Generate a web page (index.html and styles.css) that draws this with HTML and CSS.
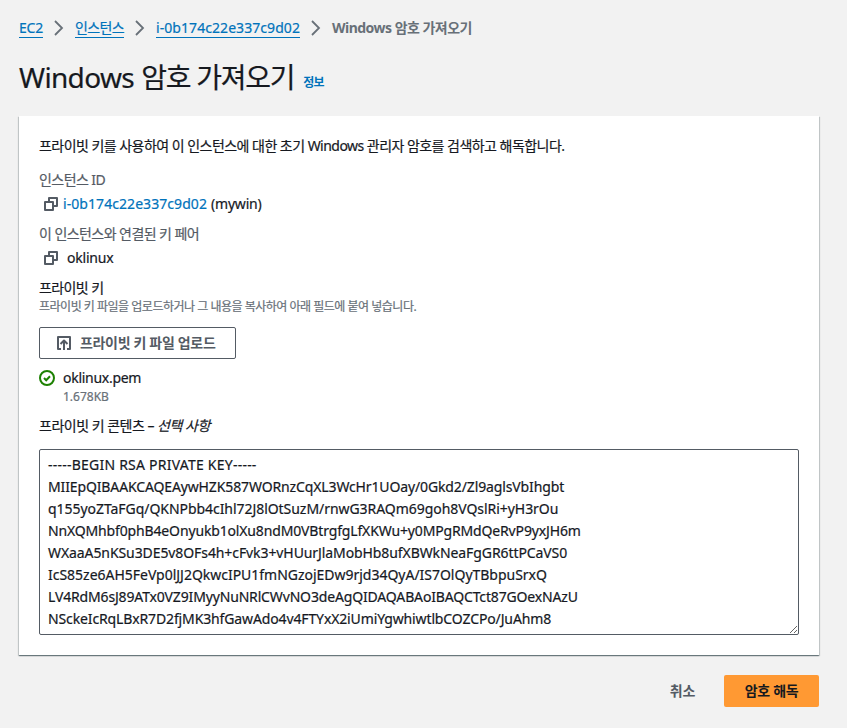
FILE: index.html
```html
<!DOCTYPE html>
<html lang="ko">
<head>
<meta charset="utf-8">
<title>Windows 암호 가져오기</title>
<link rel="stylesheet" href="styles.css">
</head>
<body>
<nav class="crumbs">
<a class="ec2">EC2</a>
<svg class="chev" viewBox="0 0 10 16"><path d="M1 1l7 7-7 7"/></svg>
<a class="instances">인스턴스</a>
<svg class="chev" viewBox="0 0 10 16"><path d="M1 1l7 7-7 7"/></svg>
<a class="id">i-0b174c22e337c9d02</a>
<svg class="chev" viewBox="0 0 10 16"><path d="M1 1l7 7-7 7"/></svg>
<b>Windows 암호 가져오기</b>
</nav>
<header><h1><span class="title-en">Windows</span> <span class="title-ko">암호 가져오기</span></h1><a class="info">정보</a></header>
<main class="card">
<p class="row intro">프라이빗 키를 사용하여 이 인스턴스에 대한 초기 Windows 관리자 암호를 검색하고 해독합니다.</p>
<p class="row label">인스턴스 ID</p>
<p class="row value"><svg class="copy" viewBox="0 0 16 16"><path d="M2 6h8v8H2zM6 6V2h8v8h-4"/></svg><a class="id">i-0b174c22e337c9d02</a><span class="name">(mywin)</span></p>
<p class="row label">이 인스턴스와 연결된 키 페어</p>
<p class="row value key"><svg class="copy" viewBox="0 0 16 16"><path d="M2 6h8v8H2zM6 6V2h8v8h-4"/></svg><span class="name">oklinux</span></p>
<p class="row field">프라이빗 키</p>
<p class="desc">프라이빗 키 파일을 업로드하거나 그 내용을 복사하여 아래 필드에 붙여 넣습니다.</p>
<button class="upload"><svg class="up" viewBox="0 0 16 16"><path d="M5 14H2V2h12v12h-3M8 15V6M4.500 9L8 5.500 11.500 9"/></svg><span>프라이빗 키 파일 업로드</span></button>
<p class="row file"><svg class="ok" viewBox="0 0 16 16"><circle cx="8" cy="8" r="7"/><path d="M5 8l2.200 2.200L11 6.200"/></svg><span>oklinux.pem</span></p>
<p class="size">1.678KB</p>
<p class="row content">프라이빗 키 콘텐츠 – <i>선택 사항</i></p>
<div class="area">
<div>-----BEGIN RSA PRIVATE KEY-----</div>
<div>MIIEpQIBAAKCAQEAywHZK587WORnzCqXL3WcHr1UOay/0Gkd2/Zl9aglsVbIhgbt</div>
<div>q155yoZTaFGq/QKNPbb4cIhl72J8lOtSuzM/rnwG3RAQm69goh8VQslRi+yH3rOu</div>
<div>NnXQMhbf0phB4eOnyukb1olXu8ndM0VBtrgfgLfXKWu+y0MPgRMdQeRvP9yxJH6m</div>
<div>WXaaA5nKSu3DE5v8OFs4h+cFvk3+vHUurJlaMobHb8ufXBWkNeaFgGR6ttPCaVS0</div>
<div>IcS85ze6AH5FeVp0lJJ2QkwcIPU1fmNGzojEDw9rjd34QyA/IS7OlQyTBbpuSrxQ</div>
<div>LV4RdM6sJ89ATx0VZ9IMyyNuNRlCWvNO3deAgQIDAQABAoIBAQCTct87GOexNAzU</div>
<div>NSckeIcRqLBxR7D2fjMK3hfGawAdo4v4FTYxX2iUmiYgwhiwtlbCOZCPo/JuAhm8</div>
</div>
</main>
<footer><button class="cancel">취소</button><button class="go">암호 해독</button></footer>
</body>
</html>
```
FILE: styles.css
```css
* { box-sizing: border-box; }
body { margin: 0; padding: 17px 28px 0 19px; height: 728px; overflow: hidden; background: #f2f2f2; color: #16191f; font: 14px/22px "Noto Sans", "Noto Sans CJK KR", sans-serif; -webkit-text-stroke: .2px; }
p, h1 { margin: 0; white-space: nowrap; }
a { color: #0073bb; }
svg { fill: none; flex: none; }
.id { letter-spacing: .065px; }
.crumbs { display: flex; height: 22px; white-space: nowrap; }
.crumbs a { border-bottom: 1px solid #0073bb; height: 21px; }
.crumbs b { color: #687078; letter-spacing: -.52px; -webkit-text-stroke: 0; }
.ec2 { letter-spacing: -.214px; }
.instances { letter-spacing: -.633px; }
.chev { width: 10px; height: 16px; margin: 3px 11px; stroke: #687078; stroke-width: 1.8; }
header { display: flex; height: 36px; margin-top: 20px; }
h1 { font-size: 28px; line-height: 36px; font-weight: 400; }
.title-en { letter-spacing: -.656px; }
.title-ko { letter-spacing: -1.263px; }
.info { font-size: 12px; font-weight: 700; margin: 13px 0 0 9px; letter-spacing: -.8px; -webkit-text-stroke: 0; }
.card { width: 800px; height: 539px; margin-top: 21px; padding: 19px 20px 0; background: #fff; box-shadow: 0 1px 1px rgba(0,28,36,.4), 1px 1px 1px rgba(0,28,36,.15), -1px 1px 1px rgba(0,28,36,.15); }
.row { height: 22px; }
.intro { margin-bottom: 12px; letter-spacing: -.535px; }
.label { color: #545b64; margin-bottom: 2px; letter-spacing: -.56px; }
.value { display: flex; margin: 0 0 8px 4px; gap: 4px; }
.name { letter-spacing: -.2px; }
.key { gap: 8px; }
.copy, .up { width: 16px; height: 16px; margin-top: 3px; stroke: #545b64; stroke-width: 2; stroke-linejoin: round; }
.field { letter-spacing: -.6px; }
.desc { font-size: 12px; line-height: 18px; height: 18px; color: #687078; margin-top: -1px; letter-spacing: -.49px; }
.upload { display: flex; align-items: center; gap: 8px; width: 197px; height: 32px; margin: 11px 0 8px; padding: 0 16px; border: 1px solid #545b64; border-radius: 2px; background: #fff; color: #545b64; font: inherit; font-weight: 700; letter-spacing: -.33px; white-space: nowrap; -webkit-text-stroke: 0; }
.upload .up { margin: 0; }
.file { display: flex; gap: 8px; letter-spacing: -.28px; }
.ok { width: 16px; height: 16px; margin-top: 3px; stroke: #1d8102; stroke-width: 2; }
.size { margin: -1px 0 9px 24px; height: 18px; font-size: 12px; line-height: 18px; color: #687078; }
.content { letter-spacing: -.5px; }
.area { width: 760px; height: 186px; margin-top: 12px; padding: 4px 8px; border: 1px solid #545b64; border-radius: 2px; overflow: hidden; resize: both; white-space: nowrap; }
.area div { height: 22px; }
.area div:nth-child(1) { letter-spacing: .23px; }
.area div:nth-child(2) { letter-spacing: -.13px; }
.area div:nth-child(3) { letter-spacing: -.05px; }
.area div:nth-child(4) { letter-spacing: -.15px; }
.area div:nth-child(5) { letter-spacing: -.09px; }
.area div:nth-child(6) { letter-spacing: -.02px; }
.area div:nth-child(7) { letter-spacing: -.155px; }
.area div:nth-child(8) { letter-spacing: -.13px; }
footer { display: flex; justify-content: flex-end; width: 800px; margin-top: 20px; }
footer button { height: 32px; padding: 0 20px; border: 0; border-radius: 2px; background: none; font: inherit; font-weight: 700; color: #545b64; letter-spacing: -.3px; white-space: nowrap; -webkit-text-stroke: 0; }
.cancel { margin-right: 9px; }
.go { width: 95px; background: #ff9933; color: #16191f; }
```
